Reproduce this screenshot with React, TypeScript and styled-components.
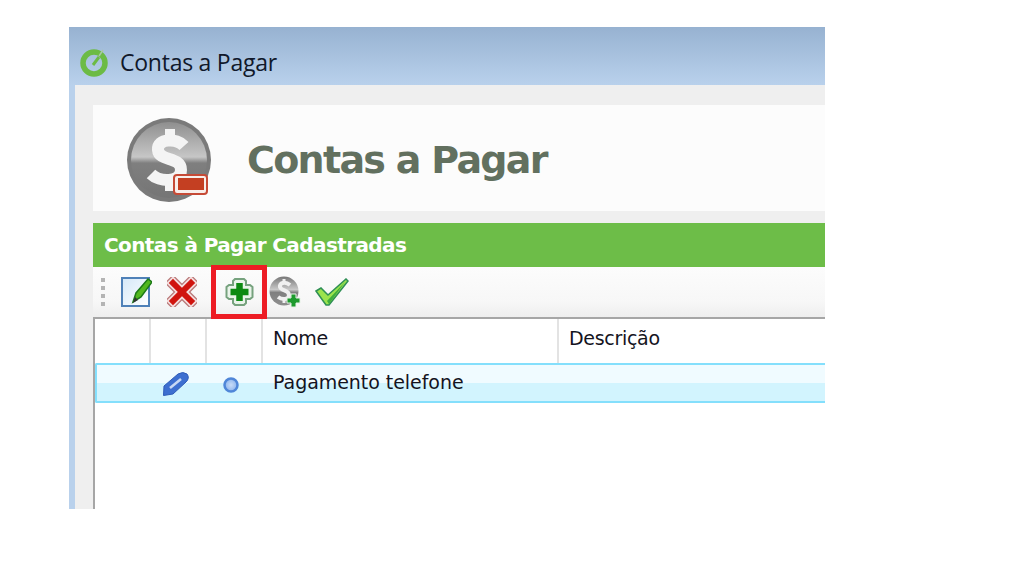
import styled, { createGlobalStyle } from "styled-components";

const GlobalStyle = createGlobalStyle`
  html, body {
    margin: 0;
    padding: 0;
    background: #ffffff;
  }
`;

const Page = styled.div`
  width: 1017px;
  height: 576px;
  padding: 27px 0 0 69px;
  box-sizing: border-box;
  overflow: hidden;
`;

const Window = styled.div`
  width: 756px;
  height: 482px;
  display: flex;
  flex-direction: column;
`;

const TitleBar = styled.div`
  height: 58px;
  flex: none;
  display: flex;
  align-items: center;
  gap: 10px;
  padding: 11px 0 0 11px;
  box-sizing: border-box;
  background: linear-gradient(#97b2d1, #b9d1ec);
  color: #10182a;
  font: 23px "Open Sans", sans-serif;
  letter-spacing: -0.25px;
`;

const Body = styled.div`
  flex: 1;
  min-height: 0;
  border-left: 6px solid #b9d1ec;
  background: #efefef;
  padding: 20px 0 0 18px;
  display: flex;
  flex-direction: column;
`;

const Banner = styled.div`
  height: 106px;
  flex: none;
  box-sizing: border-box;
  background: #fcfcfc;
  display: flex;
  align-items: center;
  padding: 4px 0 0 34px;
  gap: 36px;
`;

const BannerTitle = styled.h1`
  margin: 0;
  color: #62705f;
  font: bold 38px "DejaVu Sans", sans-serif;
  letter-spacing: -1.7px;
`;

const GreenBar = styled.div`
  height: 44px;
  flex: none;
  margin-top: 12px;
  background: #6dbd48;
  color: #ffffff;
  display: flex;
  align-items: center;
  padding-left: 11px;
  font: bold 20px "DejaVu Sans", sans-serif;
  letter-spacing: -0.6px;
`;

const Toolbar = styled.div`
  height: 50px;
  flex: none;
  position: relative;
  display: flex;
  align-items: center;
  background: linear-gradient(#fcfcfc, #f7f7f7 70%, #eeeeee);
  border-bottom: 2px solid #a6a6a6;
`;

const Grip = styled.div`
  width: 4px;
  height: 28px;
  margin: 0 16px 0 8px;
  background: repeating-linear-gradient(#b4b4b4 0 4px, transparent 4px 8px);
`;

const ToolIcon = styled.svg<{ $gap: number }>`
  flex: none;
  margin-right: ${(p) => p.$gap}px;
`;

const Highlight = styled.div`
  position: absolute;
  left: 118px;
  top: -2px;
  width: 46px;
  height: 44px;
  border: 5px solid #ed1c24;
`;

const Grid = styled.div`
  flex: 1;
  min-height: 0;
  background: #ffffff;
  border-left: 2px solid #a6a6a6;
`;

const HeaderRow = styled.div`
  height: 44px;
  display: grid;
  grid-template-columns: 56px 56px 56px 296px 1fr;
`;

const HeaderCell = styled.div`
  border-right: 2px solid #e3e3e3;
  display: flex;
  align-items: center;
  padding: 0 0 6px 10px;
  box-sizing: border-box;
  color: #14141e;
  font: 19px "DejaVu Sans", sans-serif;
  letter-spacing: -0.3px;
  &:last-child {
    border-right: none;
  }
`;

const DataRow = styled.div`
  height: 40px;
  box-sizing: border-box;
  border: 2px solid #84dffc;
  border-right: none;
  border-radius: 2px 0 0 2px;
  background: linear-gradient(#f0fbff 50%, #d2f4fe 50%);
  display: grid;
  grid-template-columns: 54px 56px 56px 1fr;
`;

const DataCell = styled.div<{ $right: number; $top: number }>`
  display: flex;
  align-items: center;
  justify-content: center;
  box-sizing: border-box;
  padding: ${(p) => p.$top}px ${(p) => p.$right}px 0 0;
`;

const DataText = styled.div`
  padding-left: 10px;
  color: #14141e;
  font: 19px "DejaVu Sans", sans-serif;
  letter-spacing: -0.05px;
  line-height: 34px;
`;

const ClockLogo = () => (
  <svg width="30" height="30" viewBox="0 0 30 30">
    <circle cx="14" cy="16" r="11" fill="none" stroke="#6cbb45" strokeWidth="5.5" />
    <path d="M13 18 L19 10" stroke="#6cbb45" strokeWidth="3" />
    <path d="M19 9 L23 3" stroke="#a9c9a0" strokeWidth="1.5" />
  </svg>
);

const MoneyLogo = () => (
  <svg width="84" height="84" viewBox="0 0 84 84">
    <defs>
      <linearGradient id="coinTop" x1="0" y1="0" x2="0" y2="1">
        <stop offset="0" stopColor="#8f8f8f" />
        <stop offset="0.46" stopColor="#c6c6c6" />
        <stop offset="0.54" stopColor="#7f7f7f" />
        <stop offset="1" stopColor="#757575" />
      </linearGradient>
    </defs>
    <circle cx="42" cy="42" r="42" fill="#7a7a7a" />
    <circle cx="42" cy="42" r="38" fill="url(#coinTop)" />
    <path
      d="M57 28 C50 20 30 20 31 32 C32 44 54 38 54 52 C54 65 32 64 24 56"
      fill="none"
      stroke="#f4f4f4"
      strokeWidth="12"
    />
    <path d="M43 11 V24 M43 60 V73" stroke="#f4f4f4" strokeWidth="10" />
    <rect x="47" y="57" width="33" height="19" rx="3" fill="#f8eeea" stroke="#c64a36" strokeWidth="2" />
    <rect x="51" y="60" width="26" height="12" fill="#c43f22" />
  </svg>
);

const EditIcon = () => (
  <ToolIcon $gap={15} width="31" height="32" viewBox="0 0 31 32">
    <defs>
      <linearGradient id="sheet" x1="0" y1="0" x2="1" y2="1">
        <stop offset="0" stopColor="#d5e8f8" />
        <stop offset="1" stopColor="#ffffff" />
      </linearGradient>
    </defs>
    <rect x="1" y="2" width="27" height="28" fill="url(#sheet)" stroke="#4f81b8" strokeWidth="2" />
    <path d="M12 26 L15 17 L27 3 L31 6 L20 21 Z" fill="#52b81f" stroke="#1c7a18" strokeWidth="1.5" />
    <path d="M12 27 L14 21 L17 24 Z" fill="#333333" />
  </ToolIcon>
);

const crossLines = "M6 6 L24 24 M24 6 L6 24";

const DeleteIcon = () => (
  <ToolIcon $gap={28} width="30" height="30" viewBox="0 0 30 30">
    <path d={crossLines} stroke="#b87878" strokeWidth="12" strokeLinecap="square" />
    <path d={crossLines} stroke="#f4dede" strokeWidth="9.5" strokeLinecap="square" />
    <path d={crossLines} stroke="#d0140e" strokeWidth="6" strokeLinecap="square" />
  </ToolIcon>
);

const AddIcon = () => (
  <ToolIcon $gap={15} width="29" height="30" viewBox="0 0 29 30">
    <path
      d="M10 2 H19 L21 4 V8 H25 L27.500 10 V20 L25 22 H21 V26 L19 28 H10 L8 26 V22 H4 L1.500 20 V10 L4 8 H8 V4 Z"
      fill="#eaf4ea"
      stroke="#76a27e"
      strokeWidth="2"
    />
    <path d="M14.500 6 V24 M5.500 15 H23.500" stroke="#0d8a12" strokeWidth="6.500" />
  </ToolIcon>
);

const MoneyAddIcon = () => (
  <ToolIcon $gap={14} width="32" height="32" viewBox="0 0 32 32">
    <defs>
      <linearGradient id="coinSmall" x1="0" y1="0" x2="0" y2="1">
        <stop offset="0" stopColor="#777777" />
        <stop offset="0.45" stopColor="#c8c8c8" />
        <stop offset="0.55" stopColor="#808080" />
        <stop offset="1" stopColor="#8e8e8e" />
      </linearGradient>
    </defs>
    <circle cx="15" cy="15" r="14.500" fill="url(#coinSmall)" />
    <path d="M21 9 C16 5 10 7 11 11 C12 15 20 14 20 19 C20 24 13 24 9 21" fill="none" stroke="#f0f0f0" strokeWidth="4" />
    <path d="M15 3 V7 M15 23 V27" stroke="#f0f0f0" strokeWidth="3" />
    <path d="M22 18 H27 V22 H31 V27 H27 V31 H22 V27 H18 V22 H22 Z" fill="#1d9a2d" stroke="#e6f2e6" strokeWidth="1" />
  </ToolIcon>
);

const CheckIcon = () => (
  <ToolIcon $gap={0} width="34" height="28" viewBox="0 0 34 28">
    <path d="M1 13 L6 10 L13 17 L31 1 L33 3 L14 27 L11 27 Z" fill="#9be34e" stroke="#2f8f55" strokeWidth="1.500" />
    <path d="M12 23 L30 4 L14 26 Z" fill="#3fae3f" />
  </ToolIcon>
);

const PencilIcon = () => (
  <svg width="26" height="24" viewBox="0 0 26 24">
    <path d="M0.500 23.500 L1 14 L15 2 Q20 -1 24 2 Q27 6 23 10 L10 22 Z" fill="#3d6fd0" stroke="#2f5cb8" strokeWidth="1" />
    <path d="M7 16 L18 7" stroke="#c8d8f4" strokeWidth="2.500" />
  </svg>
);

const BulletIcon = () => (
  <svg width="16" height="16" viewBox="0 0 16 16">
    <defs>
      <radialGradient id="bulletFill" cx="0.5" cy="0.5" r="0.5">
        <stop offset="0" stopColor="#c8dcf8" />
        <stop offset="1" stopColor="#8db4ec" />
      </radialGradient>
    </defs>
    <circle cx="8" cy="8" r="6.500" fill="url(#bulletFill)" stroke="#4f86d8" strokeWidth="2.500" />
  </svg>
);

export default function App() {
  return (
    <Page>
      <GlobalStyle />
      <Window>
        <TitleBar>
          <ClockLogo />
          Contas a Pagar
        </TitleBar>
        <Body>
          <Banner>
            <MoneyLogo />
            <BannerTitle>Contas a Pagar</BannerTitle>
          </Banner>
          <GreenBar>Contas à Pagar Cadastradas</GreenBar>
          <Toolbar>
            <Grip />
            <EditIcon />
            <DeleteIcon />
            <AddIcon />
            <MoneyAddIcon />
            <CheckIcon />
            <Highlight />
          </Toolbar>
          <Grid>
            <HeaderRow>
              <HeaderCell />
              <HeaderCell />
              <HeaderCell />
              <HeaderCell>Nome</HeaderCell>
              <HeaderCell>Descrição</HeaderCell>
            </HeaderRow>
            <DataRow>
              <div />
              <DataCell $right={6} $top={2}>
                <PencilIcon />
              </DataCell>
              <DataCell $right={8} $top={4}>
                <BulletIcon />
              </DataCell>
              <DataText>Pagamento telefone</DataText>
            </DataRow>
          </Grid>
        </Body>
      </Window>
    </Page>
  );
}
